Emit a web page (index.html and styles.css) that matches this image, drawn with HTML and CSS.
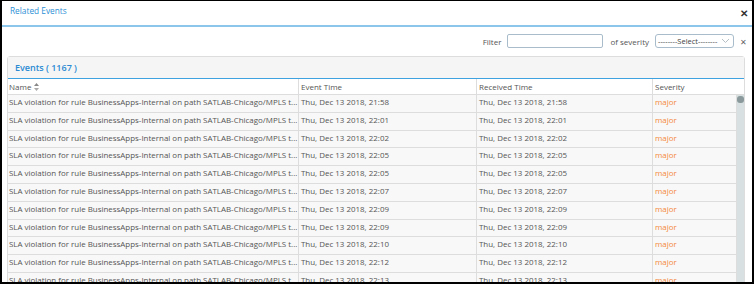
FILE: index.html
```html
<!DOCTYPE html>
<html lang="en">
<head>
    <meta charset="UTF-8">
    <title>Related Events</title>
    <link rel="stylesheet" href="styles.css">
</head>
<body>
<div class="dialog">
    <header class="dialog-head">
        <h1>Related Events</h1>
        <span class="close">&#x2715;</span>
    </header>
    <div class="filter-bar">
        <label>Filter</label>
        <input class="filter-input" type="text">
        <label>of severity</label>
        <div class="select">
            <span>--------Select--------</span>
            <svg width="9" height="6" viewBox="0 0 9 6"><path d="M1 1l3.5 3.5L8 1" fill="none" stroke="#b7bfc6" stroke-width="1"/></svg>
        </div>
        <span class="clear">&#x2715;</span>
    </div>
    <div class="panel">
        <div class="panel-head">Events ( 1167 )</div>
        <div class="grid-head">
            <div class="col name">Name
                <svg class="sort" width="5" height="8" viewBox="0 0 5 8"><path d="M2.5 0L5 3H0z" fill="#888"/><path d="M0 5h5L2.5 8z" fill="#aaa"/></svg>
            </div>
            <div class="col time">Event Time</div>
            <div class="col recv">Received Time</div>
            <div class="col sev">Severity</div>
        </div>
        <div class="grid-body">
            <div class="rows" id="rows"></div>
            <div class="scrollbar"><div class="thumb"></div></div>
        </div>
    </div>
</div>
<script>
    const times = ["21:58", "22:01", "22:02", "22:05", "22:05", "22:07", "22:09", "22:09", "22:10", "22:12", "22:13"];
    const rows = document.getElementById("rows");
    times.forEach(function(t) {
        const row = document.createElement("div");
        row.className = "row";
        row.innerHTML =
            '<div class="col name">SLA violation for rule BusinessApps-Internal on path SATLAB-Chicago/MPLS t...</div>' +
            '<div class="col time">Thu, Dec 13 2018, ' + t + '</div>' +
            '<div class="col recv">Thu, Dec 13 2018, ' + t + '</div>' +
            '<div class="col sev major">major</div>';
        rows.appendChild(row);
    });
</script>
</body>
</html>
```

FILE: styles.css
```css
body {
    margin: 0;
    font-family: 'Open Sans', sans-serif;
    color: #555;
    background: #fff;
}
.dialog {
    width: 754px;
    height: 284px;
    box-sizing: border-box;
    border: 2px solid #000;
    border-top-width: 1px;
    overflow: hidden;
}
.dialog-head {
    display: flex;
    justify-content: space-between;
    align-items: center;
    height: 24px;
    padding: 0 4px 0 8px;
    border-bottom: 2px solid #8cc6ea;
}
.dialog-head h1 {
    margin: 0 0 6px;
    font-size: 8.3px;
    font-weight: normal;
    color: #2b8fd6;
}
.close {
    font-size: 10px;
    font-weight: bold;
    color: #333;
}
.filter-bar {
    display: flex;
    justify-content: flex-end;
    align-items: center;
    gap: 6px;
    height: 14px;
    margin: 7px 5px 8px 0;
    font-size: 8px;
    color: #555;
}
.filter-input {
    width: 96px;
    height: 14px;
    box-sizing: border-box;
    border: 1px solid #a9bccb;
    border-radius: 2px;
    margin: 0 1px 0 0;
    padding: 0;
}
.select {
    display: flex;
    align-items: center;
    justify-content: space-between;
    width: 79px;
    height: 14px;
    box-sizing: border-box;
    border: 1px solid #a9bccb;
    border-radius: 3px;
    padding: 0 3px 0 2px;
    font-size: 7.5px;
    color: #444;
}
.clear {
    font-size: 8px;
    color: #666;
}
.panel {
    margin: 0 7px 0 5px;
    border: 1px solid #ddd;
    border-radius: 3px;
}
.panel-head {
    height: 21px;
    line-height: 21px;
    padding-left: 7px;
    background: #f5f5f5;
    border-bottom: 1px solid #3ea2e0;
    font-size: 9px;
    font-weight: 600;
    color: #2a8ad3;
}
.grid-head, .row {
    display: flex;
    border-bottom: 1px solid #ddd;
}
.grid-head {
    height: 15px;
    line-height: 15px;
    font-size: 8px;
}
.col {
    box-sizing: border-box;
    padding-left: 2px;
    border-right: 1px solid #ddd;
    white-space: nowrap;
}
.name { width: 291px; padding-left: 1px; }
.time { width: 178px; }
.recv { width: 176px; }
.sev { width: 84px; border-right: none; }
.grid-head .sev { flex: 1; }
.sort {
    vertical-align: -1px;
    margin-left: 1px;
}
.grid-body {
    display: flex;
}
.rows {
    width: 729px;
}
.row {
    height: 17.8px;
    box-sizing: border-box;
    line-height: 15.5px;
    font-size: 7.95px;
    background: #f8f8f8;
    color: #555;
}
.row .sev {
    border-right: 1px solid #ddd;
}
.major {
    color: #f5893d;
}
.scrollbar {
    width: 7px;
    background: #d9e0e1;
    padding-top: 1px;
}
.thumb {
    height: 7px;
    border-radius: 3px;
    background: #8a9a9c;
}
```
